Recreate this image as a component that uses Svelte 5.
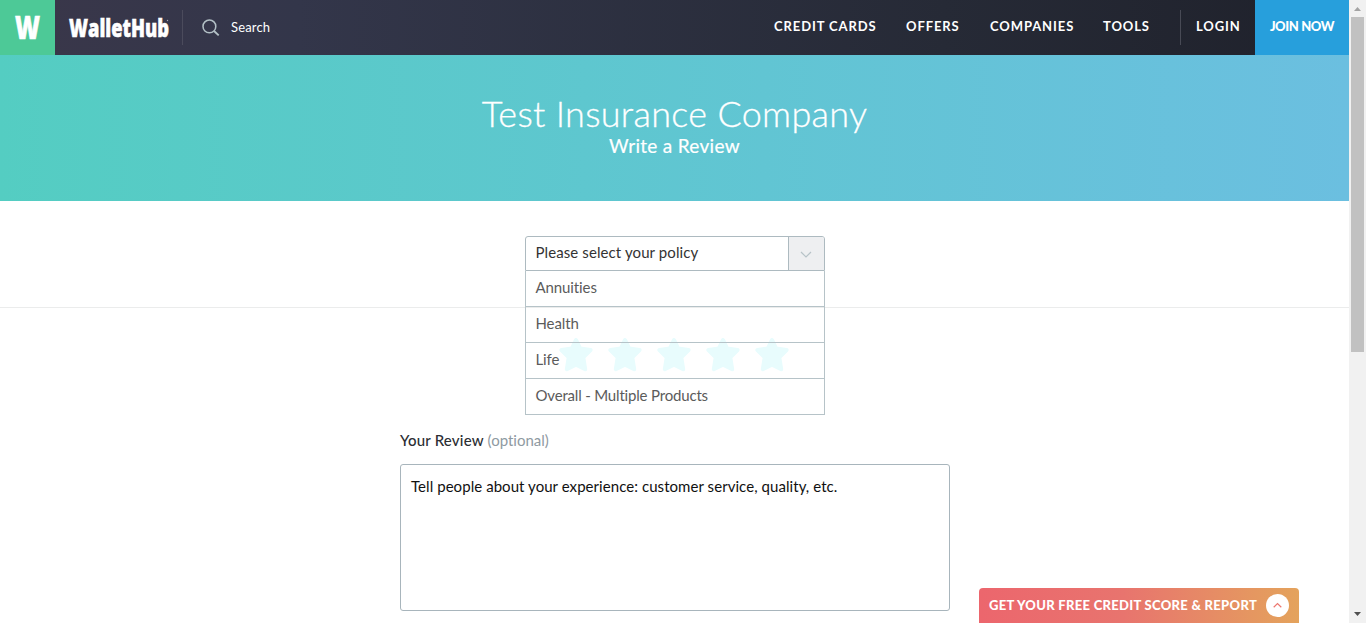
<script>
  const nav = [
    { label: 'CREDIT CARDS', w: 102 },
    { label: 'OFFERS', w: 54 },
    { label: 'COMPANIES', w: 83 },
    { label: 'TOOLS', w: 47 }
  ];
  const policies = ['Annuities', 'Health', 'Life', 'Overall - Multiple Products'];
  const stars = [1, 2, 3, 4, 5];
</script>

<div class="window">
  <div class="page">
    <header>
      <div class="mark">
        <svg width="55" height="55" viewBox="0 0 55 55"><text x="15" y="38.5" textLength="25" lengthAdjust="spacingAndGlyphs" class="w">W</text></svg>
      </div>
      <svg class="brand" width="127" height="55" viewBox="0 0 127 55">
        <text x="14" y="36.5" textLength="100" lengthAdjust="spacingAndGlyphs" class="name">WalletHub</text>
        <circle cx="112.5" cy="20.5" r="0.7" fill="#aaa9b4" />
      </svg>
      <div class="search">
        <svg width="18" height="18" viewBox="0 0 18 18" fill="none" stroke="#b3c0c6" stroke-width="1.5"><circle cx="7.4" cy="7.4" r="6.4" /><path d="M12 12l4.7 4.4" stroke-width="1.9" /></svg>
        <span>Search</span>
      </div>
      <nav>
        {#each nav as item}
          <a href="#top" style="width: {item.w}px">{item.label}</a>
        {/each}
      </nav>
      <div class="login">LOGIN</div>
      <div class="join">JOIN NOW</div>
    </header>

    <section class="hero">
      <h1>Test Insurance Company</h1>
      <h2>Write a Review</h2>
    </section>

    <section class="picker">
      <div class="select">
        <div class="current">
          <span>Please select your policy</span>
          <div class="arrow"><svg width="12" height="8" viewBox="0 0 12 8" fill="none" stroke="#b7c3c8" stroke-width="1.2"><path d="M1 1l5 5 5-5" /></svg></div>
        </div>
        <ul>
          {#each policies as policy, i}
            <li class="p{i}">{policy}</li>
          {/each}
        </ul>
      </div>
    </section>

    <section class="review">
      <div class="stars">
        {#each stars as star}
          <svg width="34" height="34" viewBox="0 0 34 34"><path d="M17 2l4.200 8.600 10.400 1.400-7.300 7.400 1.900 11.800-9.200-4.500-9.200 4.500 1.900-11.800L2.400 12l10.400-1.400z" fill="#e8fcfd" stroke="#e8fcfd" stroke-width="4" stroke-linejoin="round" /></svg>
        {/each}
      </div>
      <div class="form">
        <div class="label"><b>Your Review</b> <span>(optional)</span></div>
        <div class="box">Tell people about your experience: customer service, quality, etc.</div>
      </div>
    </section>

    <div class="promo">
      <span>GET YOUR FREE CREDIT SCORE &amp; REPORT</span>
      <svg width="23" height="23" viewBox="0 0 23 23"><circle cx="11.5" cy="11.5" r="11.5" fill="#fff" /><path d="M7.700 13.200l3.800-3.700 3.800 3.700" fill="none" stroke="#ec7770" stroke-width="1.2" /></svg>
    </div>
  </div>
  <div class="scrollbar">
    <svg width="17" height="17" viewBox="0 0 17 17"><path d="M5 11l3.500-4 3.500 4z" fill="#a3a3a3" /></svg>
    <div class="thumb"></div>
    <svg width="17" height="17" viewBox="0 0 17 17"><path d="M5 6l3.500 4 3.500-4z" fill="#505050" /></svg>
  </div>
</div>

<style>
  :global(body) { margin: 0; overflow: hidden; background: #fff; }
  .window { display: flex; width: 1366px; height: 623px; overflow: hidden; font-family: Lato, "Liberation Sans", sans-serif; font-variant-ligatures: none; }
  .page { position: relative; width: 1349px; height: 623px; display: flex; flex-direction: column; }
  svg { display: block; flex: none; }
  .brand { overflow: visible; }
  header { display: flex; height: 55px; flex: none; background: linear-gradient(90deg, #3a374a, #33364a 22%, #262a36 70%, #1f212b); color: #fff; }
  .mark { width: 55px; background: #4dc997; }
  .w { font: 900 32px "Open Sans", sans-serif; fill: #fff; stroke: #fff; stroke-width: 0.7px; }
  .name { font: 800 25.500px "Open Sans", sans-serif; fill: #fff; stroke: #fff; stroke-width: 0.6px; }
  .search { display: flex; align-items: center; height: 35px; margin-top: 10px; padding-left: 19px; border-left: 1px solid #4b4b5c; gap: 11px; font-size: 13px; letter-spacing: 0.150px; }
  .search span { margin-top: -1px; }
  nav { display: flex; margin-left: auto; gap: 30px; padding-right: 30px; }
  nav a { color: #fff; text-decoration: none; }
  nav a, .login { white-space: nowrap; font-size: 13px; font-weight: 700; letter-spacing: 0.900px; line-height: 53px; }
  .login { height: 35px; line-height: 33px; margin-top: 10px; border-left: 1px solid #484a55; padding-left: 15px; width: 59px; }
  .join { width: 94px; text-align: center; background: #279fdc; font-size: 13px; font-weight: 900; letter-spacing: -0.400px; line-height: 53px; }
  .hero { height: 146px; flex: none; text-align: center; color: #fff; background: linear-gradient(90deg, #54cdc2, #6bbfe0); }
  h1 { margin: 0; padding-top: 37px; font-size: 36px; line-height: 42px; font-weight: 300; letter-spacing: 0.300px; -webkit-text-stroke: 0.3px #fff; }
  h2 { margin: 0; font-size: 19px; line-height: 24px; font-weight: 400; letter-spacing: 0.300px; -webkit-text-stroke: 0.2px #fff; }
  .picker { height: 106px; flex: none; border-bottom: 1px solid #ebecec; }
  .select { position: relative; z-index: 2; width: 300px; margin: 35px auto 0; margin-left: 525px; font-size: 15px; }
  .current { display: flex; box-sizing: border-box; height: 35px; border: 1px solid #adbac0; border-radius: 3px 3px 0 0; background: #fff; color: #333; overflow: hidden; letter-spacing: 0.100px; }
  .current span { flex: 1; padding-left: 9.500px; line-height: 31px; }
  .arrow { width: 35px; border-left: 1px solid #adbac0; background: #eeeff1; display: flex; justify-content: center; align-items: center; padding-top: 3px; height: 30px; }
  .arrow svg { margin-left: -2px; }
  ul { margin: 0; padding: 0; list-style: none; }
  li { box-sizing: border-box; height: 36px; border: 1px solid #b6c3c8; border-top: 0; padding-left: 9.500px; line-height: 33px; color: #5b5b5b; background: #fff; letter-spacing: -0.100px; }
  .p3 { letter-spacing: -0.180px; }
  .p1, .p2 { background: transparent; }
  .stars { display: flex; gap: 15px; margin: 30px 0 0 559px; }
  .form { width: 550px; margin: 56px 0 0 400px; }
  .label { font-size: 15px; line-height: 24px; color: #8f9aa2; }
  .label b { font-weight: 500; color: #2b2e33; letter-spacing: 0.200px; }
  .box { box-sizing: border-box; height: 147px; margin-top: 12px; padding: 9px 10px; border: 1px solid #a8b5bc; border-radius: 3px; font-size: 15px; line-height: 24px; letter-spacing: 0.060px; color: #111; }
  .promo { position: absolute; left: 979px; bottom: 0; box-sizing: border-box; width: 320px; height: 35px; padding: 0 10px; display: flex; align-items: center; justify-content: space-between; border-radius: 4px 4px 0 0; background: linear-gradient(90deg, #ec666d, #e8746e 45%, #e4a35c); color: #fff; font-size: 13px; font-weight: 900; letter-spacing: 0.300px; white-space: nowrap; }
  .promo span { margin-top: -2px; }
  .scrollbar { width: 17px; height: 623px; background: #f1f1f1; display: flex; flex-direction: column; }
  .thumb { width: 13px; height: 335px; margin: 0 2px auto; background: #c1c1c1; }
</style>
